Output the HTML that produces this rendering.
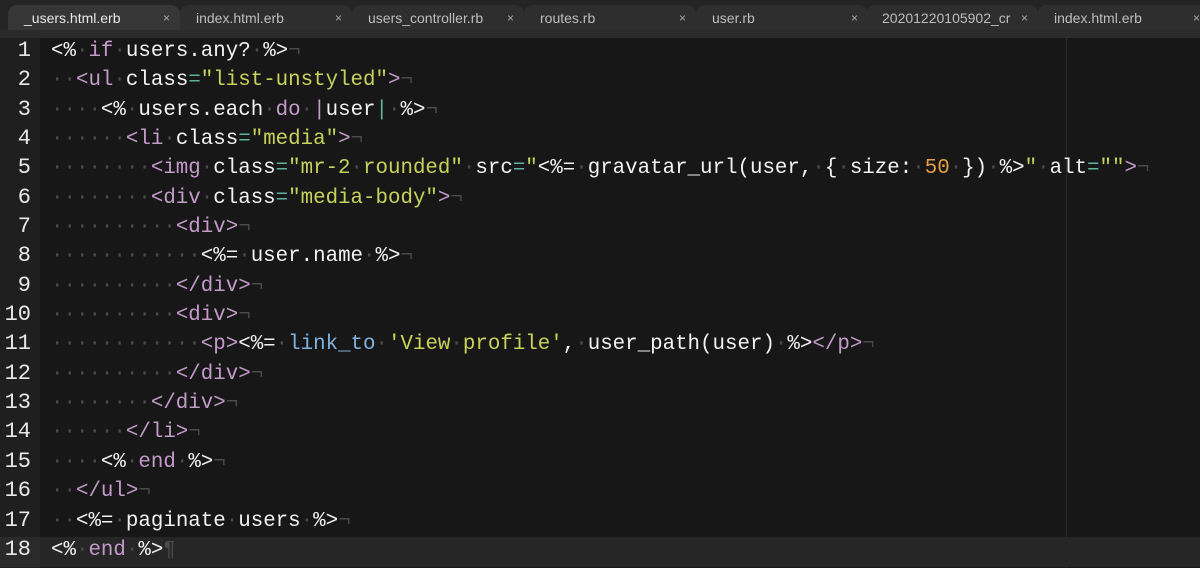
<!DOCTYPE html>
<html><head><meta charset="utf-8"><style>
body{margin:0;width:1200px;height:568px;background:#171717;overflow:hidden;position:relative;font-family:"Liberation Mono",monospace}
.tabs{position:absolute;left:0;top:0;width:1200px;height:38px;background:#242424}
.strip{position:absolute;left:0;top:30px;width:1200px;height:8px;background:#2b2b2b}
.tab{position:absolute;top:5px;height:25px;width:172px;background:#2e2e2e;border-radius:9px 9px 0 0;font:14px "Liberation Sans",sans-serif;color:#bdbdbd;line-height:26px;box-sizing:border-box;padding-left:16px;white-space:nowrap;overflow:hidden}
.tab.a{background:#363636;color:#e8e8e8}
.tab .x{position:absolute;right:10px;top:0;font-size:12px;color:#aaa}
.gut{position:absolute;left:0;top:38px;width:40px;height:530px;background:#1f1f1f}
.ruler{position:absolute;left:1066px;top:38px;width:1px;height:530px;background:#2a2a2a}
.hl{position:absolute;left:40px;top:537px;width:1160px;height:30px;background:#262626}
.hlg{position:absolute;left:0;top:537px;width:40px;height:30px;background:#2a2a2a}
.code{position:absolute;left:0;top:37px;font-size:20.8px;line-height:29.35px;color:#f2f2f2;white-space:pre}
.ln{display:inline-block;width:31px;text-align:right;color:#e8e8e8;margin-right:20px;font-size:22px;line-height:18px}
.d{color:#4a4a4a}.p{color:#c39ac9}.s{color:#c6d35a}.e{color:#5fb3a0}.b{color:#7fb2e0}.o{color:#e6a040}
</style></head><body>
<div class="tabs"></div><div class="strip"></div>
<div class="tab a" style="left:8px">_users.html.erb<span class="x">×</span></div>
<div class="tab" style="left:180px">index.html.erb<span class="x">×</span></div>
<div class="tab" style="left:352px">users_controller.rb<span class="x">×</span></div>
<div class="tab" style="left:524px">routes.rb<span class="x">×</span></div>
<div class="tab" style="left:696px">user.rb<span class="x">×</span></div>
<div class="tab" style="left:866px">20201220105902_cr<span class="x">×</span></div>
<div class="tab" style="left:1038px">index.html.erb<span class="x">×</span></div>
<div class="gut"></div><div class="ruler"></div><div class="hl"></div><div class="hlg"></div>
<div class="code"><span class="ln">1</span>&lt;%<span class="d">·</span><span class="p">if</span><span class="d">·</span>users.any?<span class="d">·</span>%&gt;<span class="d">¬</span>
<span class="ln">2</span><span class="d">··</span><span class="p">&lt;ul</span><span class="d">·</span>class<span class="e">=</span><span class="s">"list-unstyled"</span><span class="p">&gt;</span><span class="d">¬</span>
<span class="ln">3</span><span class="d">····</span>&lt;%<span class="d">·</span>users.each<span class="d">·</span><span class="p">do</span><span class="d">·</span><span class="p">|</span>user<span class="e">|</span><span class="d">·</span>%&gt;<span class="d">¬</span>
<span class="ln">4</span><span class="d">······</span><span class="p">&lt;li</span><span class="d">·</span>class<span class="e">=</span><span class="s">"media"</span><span class="p">&gt;</span><span class="d">¬</span>
<span class="ln">5</span><span class="d">········</span><span class="p">&lt;img</span><span class="d">·</span>class<span class="e">=</span><span class="s">"mr-2<span class="d">·</span>rounded"</span><span class="d">·</span>src<span class="e">=</span><span class="s">"</span>&lt;%=<span class="d">·</span>gravatar_url(user,<span class="d">·</span>{<span class="d">·</span>size:<span class="d">·</span><span class="o">50</span><span class="d">·</span>})<span class="d">·</span>%&gt;<span class="s">"</span><span class="d">·</span>alt<span class="e">=</span><span class="s">""</span><span class="p">&gt;</span><span class="d">¬</span>
<span class="ln">6</span><span class="d">········</span><span class="p">&lt;div</span><span class="d">·</span>class<span class="e">=</span><span class="s">"media-body"</span><span class="p">&gt;</span><span class="d">¬</span>
<span class="ln">7</span><span class="d">··········</span><span class="p">&lt;div&gt;</span><span class="d">¬</span>
<span class="ln">8</span><span class="d">············</span>&lt;%=<span class="d">·</span>user.name<span class="d">·</span>%&gt;<span class="d">¬</span>
<span class="ln">9</span><span class="d">··········</span><span class="p">&lt;/div&gt;</span><span class="d">¬</span>
<span class="ln">10</span><span class="d">··········</span><span class="p">&lt;div&gt;</span><span class="d">¬</span>
<span class="ln">11</span><span class="d">············</span><span class="p">&lt;p&gt;</span>&lt;%=<span class="d">·</span><span class="b">link_to</span><span class="d">·</span><span class="s">'View<span class="d">·</span>profile'</span>,<span class="d">·</span>user_path(user)<span class="d">·</span>%&gt;<span class="p">&lt;/p&gt;</span><span class="d">¬</span>
<span class="ln">12</span><span class="d">··········</span><span class="p">&lt;/div&gt;</span><span class="d">¬</span>
<span class="ln">13</span><span class="d">········</span><span class="p">&lt;/div&gt;</span><span class="d">¬</span>
<span class="ln">14</span><span class="d">······</span><span class="p">&lt;/li&gt;</span><span class="d">¬</span>
<span class="ln">15</span><span class="d">····</span>&lt;%<span class="d">·</span><span class="p">end</span><span class="d">·</span>%&gt;<span class="d">¬</span>
<span class="ln">16</span><span class="d">··</span><span class="p">&lt;/ul&gt;</span><span class="d">¬</span>
<span class="ln">17</span><span class="d">··</span>&lt;%=<span class="d">·</span>paginate<span class="d">·</span>users<span class="d">·</span>%&gt;<span class="d">¬</span>
<span class="ln">18</span>&lt;%<span class="d">·</span><span class="p">end</span><span class="d">·</span>%&gt;<span class="d">¶</span></div>
</body></html>
